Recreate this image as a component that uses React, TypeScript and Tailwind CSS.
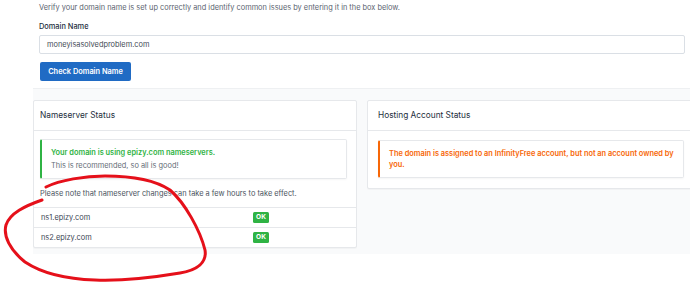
import React from "react";

const font = { fontFamily: "Inter, 'Noto Sans', sans-serif" };

function Row({ name }: { name: string }) {
  return (
    <div className="flex items-center h-[20px] border-t border-[#e6e8eb]">
      <div className="w-[219px] pl-[7px] text-[7.4px] text-[#3b4553]">{name}</div>
      <div className="bg-[#2fb344] text-white text-[6.6px] font-bold h-[11px] w-[16px] rounded-[1.5px] flex items-center justify-center">
        OK
      </div>
    </div>
  );
}

export default function App() {
  return (
    <div className="relative w-[690px] h-[282px] bg-white overflow-hidden" style={font}>
      <div className="pl-[29px] w-[695px]">
        <div className="bg-white px-[10px] h-[88px]">
          <p className="pt-[3px] text-[7.4px] leading-[10px] text-[#5b6470]">
            Verify your domain name is set up correctly and identify common issues by entering it in the box below.
          </p>
          <div className="mt-[9px] text-[7.4px] leading-[10px] font-medium text-[#232e3c]">Domain Name</div>
          <div className="mt-[3px] h-[19px] border border-[#dadfe5] rounded-[2px] flex items-center pl-[7px] text-[7.4px] text-[#444b55]">
            moneyisasolvedproblem.com
          </div>
          <button className="mt-[8px] ml-[1px] w-[91px] h-[19px] bg-[#206bc4] rounded-[2px] text-white text-[7.4px] font-semibold flex items-center justify-center">
            Check Domain Name
          </button>
        </div>
      </div>
      <div className="ml-[33px] bg-[#f9fafb] h-[166px] pt-[11px] border-t border-[#eef0f2]">
        <div className="flex gap-[10px]">
          <div className="w-[324px] shrink-0 bg-white border border-[#e6e8eb] rounded-[2px] shadow-[0_1px_1px_rgba(0,0,0,0.03)]">
            <div className="h-[30px] flex items-center px-[6px] border-b border-[#e6e8eb] text-[8.3px] text-[#232e3c]">
              Nameserver Status
            </div>
            <div className="pl-[6px] pr-[9px] pt-[8px]">
              <div className="h-[40px] bg-white border border-[#e6e8eb] border-l-[2px] border-l-[#2fb344] rounded-[2px] pl-[9px] flex flex-col justify-center shadow-[0_1px_2px_rgba(0,0,0,0.04)]">
                <div className="text-[7.4px] leading-[10px] font-semibold text-[#2fb344]">
                  Your domain is using epizy.com nameservers.
                </div>
                <div className="mt-[3px] text-[7.4px] leading-[10px] text-[#656d77]">
                  This is recommended, so all is good!
                </div>
              </div>
            </div>
            <p className="mt-[10px] mb-[8px] px-[6px] text-[7.4px] leading-[10px] text-[#4a5360]">
              Please note that nameserver changes can take a few hours to take effect.
            </p>
            <Row name="ns1.epizy.com" />
            <Row name="ns2.epizy.com" />
          </div>
          <div className="w-[328px] shrink-0 self-start bg-white border border-[#e6e8eb] rounded-[2px] shadow-[0_1px_1px_rgba(0,0,0,0.03)]">
            <div className="h-[30px] flex items-center px-[10px] border-b border-[#e6e8eb] text-[8.3px] text-[#232e3c]">
              Hosting Account Status
            </div>
            <div className="px-[10px] pt-[9px] pb-[10px]">
              <div className="h-[38px] bg-white border border-[#e6e8eb] border-l-[2px] border-l-[#f76707] rounded-[2px] pl-[9px] pr-[2px] flex items-center shadow-[0_1px_2px_rgba(0,0,0,0.04)]">
                <div className="text-[7.4px] leading-[11px] font-semibold text-[#f76707]">
                  The domain is assigned to an InfinityFree account, but not an account owned by you.
                </div>
              </div>
            </div>
          </div>
        </div>
      </div>
      <svg className="absolute left-0 top-0 pointer-events-none" width="690" height="282" viewBox="0 0 690 282">
        <path
          d="M46 187 C 60 180, 85 176, 105 176 C 130 176, 155 180, 170 190 C 185 203, 200 230, 205 250 C 207 262, 198 270, 180 273 C 150 278, 120 281, 95 280 C 65 279, 40 272, 25 262 C 10 250, 3 236, 6 225 C 10 213, 25 206, 42 200"
          fill="none"
          stroke="#e5101a"
          strokeWidth="3"
          strokeLinecap="round"
          strokeLinejoin="round"
        />
      </svg>
    </div>
  );
}
